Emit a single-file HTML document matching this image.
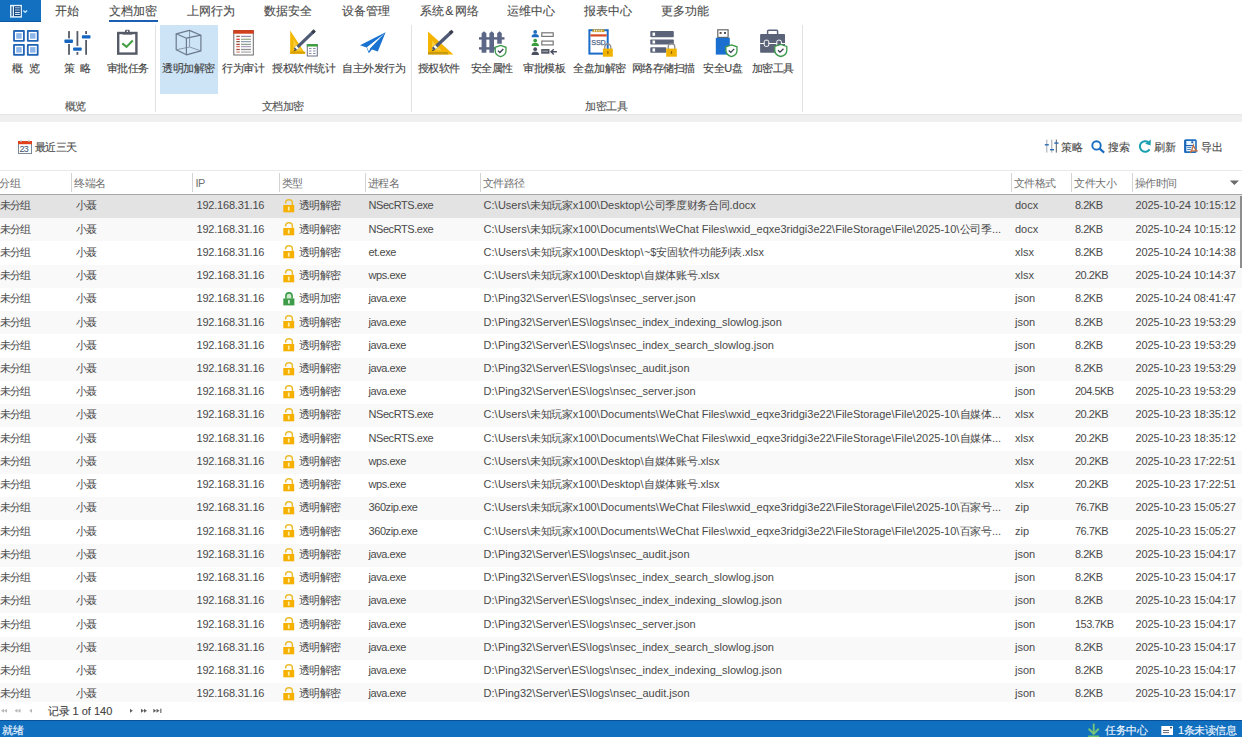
<!DOCTYPE html><html><head><meta charset="utf-8"><style>
html,body{margin:0;padding:0;width:1242px;height:737px;overflow:hidden;background:#fff;font-family:"Liberation Sans", sans-serif;}
.t{position:absolute;white-space:nowrap;line-height:20px;-webkit-text-stroke-width:0.12px;}
.g .t{-webkit-text-stroke-width:0;}
.a{position:absolute;}
svg{position:absolute;overflow:visible}

</style></head><body>
<div class="a" style="left:0px;top:0px;width:40.8px;height:21.6px;background:#136fbf;"></div>
<div class="a" style="left:0px;top:20.6px;width:40.8px;height:1px;background:#0d56a0;"></div>
<svg style="left:0;top:0" width="41" height="22">
<rect x="10.8" y="5.6" width="10.4" height="11.3" fill="#0d3f78" stroke="#dff3ff" stroke-width="1.5"/>
<line x1="13.4" y1="5.6" x2="13.4" y2="16.9" stroke="#dff3ff" stroke-width="1.4"/>
<rect x="14.4" y="6.6" width="6" height="9.4" fill="#0d3f78"/>
<line x1="15" y1="7.8" x2="19.8" y2="7.8" stroke="#a8c8e8" stroke-width="1.1"/>
<line x1="15" y1="10" x2="19.8" y2="10" stroke="#a8c8e8" stroke-width="1.1"/>
<line x1="15" y1="12.4" x2="19.8" y2="12.4" stroke="#dff3ff" stroke-width="1.1"/>
<line x1="15" y1="14.4" x2="19.8" y2="14.4" stroke="#dff3ff" stroke-width="1.1"/>
<path d="M23.3 10.5 L25.2 12.3 L27.1 10.5" fill="none" stroke="#b8e0ff" stroke-width="1.5"/>
</svg>
<div class="t" style="left:55px;top:1px;font-size:12px;color:#4c4c4c;">开始</div>
<div class="t" style="left:109px;top:1px;font-size:12px;color:#4c4c4c;">文档加密</div>
<div class="t" style="left:187px;top:1px;font-size:12px;color:#4c4c4c;">上网行为</div>
<div class="t" style="left:264px;top:1px;font-size:12px;color:#4c4c4c;">数据安全</div>
<div class="t" style="left:342px;top:1px;font-size:12px;color:#4c4c4c;">设备管理</div>
<div class="t" style="left:420px;top:1px;font-size:12px;color:#4c4c4c;">系统<span style="margin:0 1.3px">&amp;</span>网络</div>
<div class="t" style="left:506.5px;top:1px;font-size:12px;color:#4c4c4c;">运维中心</div>
<div class="t" style="left:584px;top:1px;font-size:12px;color:#4c4c4c;">报表中心</div>
<div class="t" style="left:661.3px;top:1px;font-size:12px;color:#4c4c4c;">更多功能</div>
<div class="a" style="left:109px;top:19.5px;width:49px;height:2.5px;background:#1a5fb4;"></div>
<div class="a" style="left:159.5px;top:25px;width:58.5px;height:69px;background:#cde4f7;"></div>
<div class="a" style="left:155px;top:25px;width:1px;height:87px;background:#e2e2e2;"></div>
<div class="a" style="left:411px;top:25px;width:1px;height:87px;background:#e2e2e2;"></div>
<div class="a" style="left:802px;top:25px;width:1px;height:87px;background:#e2e2e2;"></div>
<div class="a" style="left:0px;top:114px;width:1242px;height:8px;background:#efefef;"></div>
<div class="a" style="left:0px;top:114px;width:1242px;height:1px;background:#e6e6e6;"></div>
<div class="t" style="left:12.4px;top:58px;font-size:11px;color:#444;letter-spacing:-0.5px;">概<span style="margin-left:6.3px">览</span></div>
<div class="t" style="left:63.8px;top:58px;font-size:11px;color:#444;letter-spacing:-0.5px;">策<span style="margin-left:6.2px">略</span></div>
<div class="t" style="left:106.6px;top:58px;font-size:11px;color:#444;letter-spacing:-0.5px;">审批任务</div>
<div class="t" style="left:162px;top:58px;font-size:11px;color:#444;letter-spacing:-0.5px;">透明加解密</div>
<div class="t" style="left:222.4px;top:58px;font-size:11px;color:#444;letter-spacing:-0.5px;">行为审计</div>
<div class="t" style="left:272.2px;top:58px;font-size:11px;color:#444;letter-spacing:-0.5px;">授权软件统计</div>
<div class="t" style="left:342px;top:58px;font-size:11px;color:#444;letter-spacing:-0.5px;">自主外发行为</div>
<div class="t" style="left:417.7px;top:58px;font-size:11px;color:#444;letter-spacing:-0.5px;">授权软件</div>
<div class="t" style="left:470.8px;top:58px;font-size:11px;color:#444;letter-spacing:-0.5px;">安全属性</div>
<div class="t" style="left:523.2px;top:58px;font-size:11px;color:#444;letter-spacing:-0.5px;">审批模板</div>
<div class="t" style="left:573.3px;top:58px;font-size:11px;color:#444;letter-spacing:-0.5px;">全盘加解密</div>
<div class="t" style="left:631.8px;top:58px;font-size:11px;color:#444;letter-spacing:-0.5px;">网络存储扫描</div>
<div class="t" style="left:703.3px;top:58px;font-size:11px;color:#444;letter-spacing:-0.5px;">安全U盘</div>
<div class="t" style="left:751.6px;top:58px;font-size:11px;color:#444;letter-spacing:-0.5px;">加密工具</div>
<div class="t" style="left:64.6px;top:96px;font-size:11px;color:#555;letter-spacing:-0.5px;">概览</div>
<div class="t" style="left:261.6px;top:96px;font-size:11px;color:#555;letter-spacing:-0.5px;">文档加密</div>
<div class="t" style="left:585px;top:96px;font-size:11px;color:#555;letter-spacing:-0.5px;">加密工具</div>
<svg style="left:0;top:0" width="820" height="62" viewBox="0 0 820 62">
<!-- 概览 -->
<g>
<rect x="13.1" y="30.1" width="11.7" height="11.7" rx="1" fill="#2163b5"/><rect x="14.9" y="31.9" width="8.1" height="8.1" fill="#fff"/><rect x="16.2" y="33.2" width="5.5" height="5.5" fill="#8db6ea"/>
<rect x="26.9" y="30.1" width="11.7" height="11.7" rx="1" fill="#2163b5"/><rect x="28.7" y="31.9" width="8.1" height="8.1" fill="#fff"/><rect x="30" y="33.2" width="5.5" height="5.5" fill="#8db6ea"/>
<rect x="13.1" y="44" width="11.7" height="11.7" rx="1" fill="#2163b5"/><rect x="14.9" y="45.8" width="8.1" height="8.1" fill="#fff"/><rect x="16.2" y="47.1" width="5.5" height="5.5" fill="#8db6ea"/>
<rect x="26.9" y="44" width="11.7" height="11.7" rx="1" fill="#2163b5"/><rect x="28.7" y="45.8" width="8.1" height="8.1" fill="#fff"/><rect x="30" y="47.1" width="5.5" height="5.5" fill="#8db6ea"/>
</g>
<!-- 策略 sliders -->
<g fill="#555b66">
<rect x="68.1" y="31.1" width="1.8" height="7.3"/><rect x="68.1" y="44" width="1.8" height="10.8"/>
<rect x="76.5" y="31.1" width="1.8" height="14.8"/><rect x="76.5" y="52" width="1.8" height="2.8"/>
<rect x="85.2" y="31.1" width="1.8" height="2.9"/><rect x="85.2" y="40" width="1.8" height="14.8"/>
</g>
<g fill="#1565c0">
<rect x="64.4" y="39.6" width="8.6" height="3.3" rx="0.8"/>
<rect x="73.1" y="47.5" width="8.6" height="3.3" rx="0.8"/>
<rect x="81.9" y="35.2" width="8.6" height="3.4" rx="0.8"/>
</g>
<!-- 审批任务 clipboard -->
<rect x="118.2" y="33" width="18.2" height="20.6" fill="#fff" stroke="#555b66" stroke-width="2.4"/>
<rect x="122.8" y="32.3" width="9.4" height="2.3" fill="#555b66"/>
<rect x="125" y="29.7" width="4.7" height="3" rx="1.2" fill="#555b66"/>
<circle cx="127.35" cy="31.2" r="0.8" fill="#fff"/>
<path d="M122.3 43.4 L126.5 46.9 L132.8 40.4" fill="none" stroke="#45a045" stroke-width="2.1"/>
<!-- cube -->
<g fill="none" stroke="#6b7a8c" stroke-width="1.2" stroke-linejoin="round">
<path d="M189.5 30.4 L189.6 47 M189.6 47 L176.2 49.8 M189.6 47 L200.9 50.9" stroke="#8a99aa" stroke-width="1"/>
<path d="M189.4 30.4 L176.2 33.8 L186.4 38.2 L200.9 35.2 Z"/>
<path d="M176.2 33.8 L176.2 49.8 L186.4 54.8 L200.9 50.9 L200.9 35.2"/>
<path d="M186.4 38.2 L186.4 54.8"/>
</g>
<!-- 行为审计 -->
<rect x="233.8" y="30.6" width="19.5" height="24.4" fill="#fff" stroke="#6a6a6a" stroke-width="1"/>
<rect x="233.3" y="30.1" width="20.5" height="3.6" fill="#d0401f"/>
<g stroke-width="1.3">
<line x1="236.3" y1="36.4" x2="239.8" y2="36.4" stroke="#8a6a4a"/><line x1="241" y1="36.4" x2="251" y2="36.4" stroke="#9a90b0"/>
<line x1="236.3" y1="39.3" x2="239.8" y2="39.3" stroke="#e04040"/><line x1="241" y1="39.3" x2="251" y2="39.3" stroke="#a0b090"/>
<line x1="236.3" y1="41.6" x2="239.8" y2="41.6" stroke="#8a5a4a"/><line x1="241" y1="41.6" x2="251" y2="41.6" stroke="#90a0b0"/>
<line x1="236.3" y1="44.4" x2="239.8" y2="44.4" stroke="#a04a3a"/><line x1="241" y1="44.4" x2="251" y2="44.4" stroke="#90a090"/>
<line x1="236.3" y1="46.6" x2="239.8" y2="46.6" stroke="#e07060"/><line x1="241" y1="46.6" x2="251" y2="46.6" stroke="#b0a0c0"/>
<line x1="236.3" y1="49.5" x2="239.8" y2="49.5" stroke="#a04a3a"/><line x1="241" y1="49.5" x2="251" y2="49.5" stroke="#909090"/>
<line x1="236.3" y1="52.1" x2="239.8" y2="52.1" stroke="#d09080"/><line x1="241" y1="52.1" x2="251" y2="52.1" stroke="#b0b0b0"/>
</g>
<!-- 授权软件统计 -->
<path d="M290.2 30.4 L290.2 53.7 L305.2 53.7 Z" fill="#f5b800"/>
<path d="M293.3 39.5 L293.3 50.6 L301.8 50.6 Z" fill="#f9cc3c"/>
<rect x="290.2" y="51.6" width="15" height="2.1" fill="#d9a000"/>
<line x1="294.8" y1="49.6" x2="313.8" y2="31.4" stroke="#4f5a74" stroke-width="3.2"/>
<line x1="296" y1="48.4" x2="297.6" y2="46.9" stroke="#fff" stroke-width="3.4"/>
<line x1="312.3" y1="32.8" x2="314.8" y2="30.4" stroke="#3a3f4a" stroke-width="3.2"/>
<path d="M294.8 49.6 L293.3 51.4 L295.8 50.6 Z" fill="#333"/>
<rect x="307.3" y="44.7" width="10" height="11.3" fill="#fff" stroke="#6a6f86" stroke-width="1"/>
<rect x="306.8" y="44.2" width="11" height="2.3" fill="#3a9e3a"/>
<g fill="#8a90a8"><rect x="309" y="48" width="2.5" height="1"/><rect x="313" y="48" width="2.5" height="1"/><rect x="309" y="50.5" width="2.5" height="1"/><rect x="313" y="50.5" width="2.5" height="1"/><rect x="309" y="53" width="2.5" height="1"/><rect x="313" y="53" width="2.5" height="1"/></g>
<!-- paper plane -->
<path d="M385.6 32.2 L360 45.2 L366.6 47.4 L368.8 53.2 L372 49.4 L377.8 51.4 Z" fill="#1a73d0"/>
<path d="M384.6 33.4 L366.9 47.3 L368.9 51.6 L370.2 48.6 Z" fill="#fff"/>
<path d="M384.6 33.4 L370.2 48.6 L371.6 49.2 Z" fill="#1a73d0"/>
<!-- 授权软件 -->
<path d="M428 31.5 L428 54.4 L453.4 54.4 Z" fill="#f5b400"/>
<path d="M432 40.5 L432 50.6 L441.5 50.6 Z" fill="#f9cc3c"/>
<rect x="428" y="52" width="20" height="2.4" fill="#c89a10"/>
<line x1="433" y1="49.3" x2="451.2" y2="32.2" stroke="#4f5a74" stroke-width="3.3"/>
<line x1="434.6" y1="47.8" x2="436.3" y2="46.2" stroke="#fff" stroke-width="3.5"/>
<line x1="450" y1="33.3" x2="452.6" y2="30.9" stroke="#3a3f4a" stroke-width="3.3"/>
<path d="M433 49.3 L431.6 51.3 L434.2 50.5 Z" fill="#333"/>
<!-- fence -->
<g fill="#5a6482">
<rect x="479" y="37.2" width="25.5" height="2.4"/><rect x="479" y="47.2" width="17" height="2.4"/>
<path d="M481.6 33.3 L484 31.3 L486.4 33.3 L486.4 52.8 L481.6 52.8 Z" fill="#5d6888"/>
<path d="M489.4 33.3 L491.7 31.3 L494 33.3 L494 52.8 L489.4 52.8 Z" fill="#5d6888"/>
<path d="M497.2 33.3 L499.5 31.3 L501.8 33.3 L501.8 43.8 L497.2 43.8 Z" fill="#5d6888"/>
</g>
<g id="shield">
<path d="M500.6 45.4 L506 47.3 L506 51 C506 53.8 503.6 55.8 500.6 56.7 C497.6 55.8 495.2 53.8 495.2 51 L495.2 47.3 Z" fill="#fff" stroke="#3a9a48" stroke-width="1.3"/>
<path d="M497.9 50.6 L499.9 52.5 L503.3 49" fill="none" stroke="#3a4050" stroke-width="1.3"/>
</g>
<!-- 审批模板 -->
<g fill="#1a6cc0"><circle cx="535.2" cy="31.9" r="1.9"/><path d="M531.5 37.3 C531.5 35 533 34 535.2 34 C537.4 34 539 35 539 37.3 Z"/></g>
<g fill="#3a9e3a"><circle cx="535.2" cy="40.6" r="1.9"/><path d="M531.5 46 C531.5 43.7 533 42.7 535.2 42.7 C537.4 42.7 539 43.7 539 46 Z"/></g>
<g fill="#4a4f5e"><circle cx="535.2" cy="49.2" r="1.9"/><path d="M531.5 54.9 C531.5 52.4 533 51.4 535.2 51.4 C537.4 51.4 539 52.4 539 54.9 Z"/></g>
<rect x="541.8" y="32.8" width="11.4" height="3.6" fill="#fff" stroke="#777" stroke-width="1.2"/>
<rect x="541.8" y="41.1" width="11.4" height="3.8" fill="#fff" stroke="#777" stroke-width="1.2"/>
<rect x="541.2" y="49" width="8.3" height="4.7" fill="#555a66"/>
<rect x="542.5" y="50.6" width="5.5" height="1.3" fill="#9aa0aa"/>
<path d="M556.9 51.8 L551.5 51.8 M553.8 49.2 L551 51.8 L553.8 54.4" fill="none" stroke="#4a4f5e" stroke-width="1.4"/>
<!-- SSD -->
<rect x="589.4" y="30.2" width="18.3" height="23.4" fill="#fff" stroke="#1a6cc8" stroke-width="2"/>
<rect x="592.5" y="29.3" width="12" height="2.8" fill="#c8a030"/>
<g fill="#fff"><rect x="594" y="29.8" width="0.8" height="1.8"/><rect x="596.3" y="29.8" width="0.8" height="1.8"/><rect x="598.6" y="29.8" width="0.8" height="1.8"/><rect x="600.9" y="29.8" width="0.8" height="1.8"/></g>
<rect x="590.4" y="34.3" width="16.3" height="2.2" fill="#d84a20"/>
<text x="591.3" y="45.2" font-family="Liberation Sans" font-size="7.2" fill="#50688a" stroke="#50688a" stroke-width="0.25" letter-spacing="-0.2">SSD</text>
<g id="lock1">
<path d="M604.8 49 L604.8 47 A3 3 0 0 1 610.8 47 L610.8 49" fill="none" stroke="#8a8a8a" stroke-width="1.3"/>
<rect x="602.9" y="48.6" width="9.9" height="8.1" fill="#f0b400"/>
<rect x="607.3" y="51" width="1.2" height="3" fill="#a06000"/>
</g>
<!-- server -->
<g fill="#5a6378">
<rect x="650.3" y="31.1" width="23.5" height="6.2" rx="0.8"/>
<rect x="650.3" y="39.4" width="23.5" height="5.1" rx="0.8"/>
<rect x="650.3" y="47.2" width="16" height="5.6" rx="0.8"/>
</g>
<g fill="#fff"><rect x="652.5" y="32.6" width="2.6" height="3.2"/><rect x="652.5" y="40.5" width="2.6" height="3"/><rect x="652.5" y="48.4" width="2.6" height="3.2"/></g>
<path d="M668.2 49 L668.2 47 A3.3 3.3 0 0 1 674.8 47 L674.8 49" fill="none" stroke="#8a8a8a" stroke-width="1.3"/>
<rect x="666.2" y="48.6" width="10.6" height="8.1" fill="#f0b400"/>
<rect x="670.9" y="51" width="1.2" height="3" fill="#a06000"/>
<!-- USB -->
<rect x="717.8" y="29.8" width="10.3" height="7.6" fill="#fff" stroke="#666" stroke-width="1.2"/>
<rect x="719.6" y="32" width="2" height="1.9" fill="#5a4a40"/><rect x="724" y="32" width="2" height="1.9" fill="#4a4a5a"/>
<rect x="715.8" y="37.8" width="14" height="16.8" fill="#1a6fd0"/>
<path d="M731.5 44.9 L737 46.8 L737 50.6 C737 53.5 734.6 55.8 731.5 56.7 C728.4 55.8 725.9 53.5 725.9 50.6 L725.9 46.8 Z" fill="#fff" stroke="#3a9a48" stroke-width="1.3"/>
<path d="M728.8 50.5 L730.8 52.4 L734.2 48.9" fill="none" stroke="#3a4050" stroke-width="1.3"/>
<!-- toolbox -->
<rect x="767.6" y="30.2" width="10" height="5" rx="1" fill="none" stroke="#5a6378" stroke-width="1.5"/>
<rect x="760.1" y="34.1" width="24.9" height="18.7" rx="0.8" fill="#5a6378"/>
<rect x="760.1" y="43" width="24.9" height="1" fill="#fff"/>
<rect x="764.2" y="40.2" width="4.6" height="6.2" rx="1.6" fill="#5a6378" stroke="#fff" stroke-width="1"/>
<rect x="776.8" y="40.2" width="4.6" height="6.2" rx="1.6" fill="#5a6378" stroke="#fff" stroke-width="1"/>
<path d="M780.8 44.5 L786.8 46.5 L786.8 50.4 C786.8 53.3 784.2 55.6 780.8 56.5 C777.4 55.6 774.8 53.3 774.8 50.4 L774.8 46.5 Z" fill="#fff" stroke="#3a9a48" stroke-width="1.3"/>
<path d="M778 50.3 L780 52.2 L783.5 48.7" fill="none" stroke="#3a4050" stroke-width="1.3"/>
</svg>

<svg style="left:0;top:130px" width="1242" height="30" viewBox="0 130 1242 30">
<!-- calendar -->
<rect x="18.5" y="141.5" width="13" height="12" fill="#fff" stroke="#7a8a9a" stroke-width="1"/>
<rect x="18" y="141" width="14" height="3.2" fill="#e0401a"/>
<rect x="20.5" y="139.8" width="1.3" height="2.2" fill="#c0c8d0"/><rect x="28.2" y="139.8" width="1.3" height="2.2" fill="#c0c8d0"/>
<text x="19.4" y="152.2" font-family="Liberation Sans" font-size="9" fill="#3d526e" letter-spacing="-0.6">23</text>
<!-- sliders small -->
<rect x="1046.3" y="139.6" width="1" height="13" fill="#a0a8b0"/>
<rect x="1051.3" y="139.6" width="1" height="13" fill="#9aa2aa"/>
<rect x="1055.8" y="139.6" width="1" height="13" fill="#555b66"/>
<rect x="1044.8" y="144.1" width="4" height="1.4" fill="#2a6cb0"/>
<rect x="1050" y="149" width="4" height="1.4" fill="#2a6cb0"/>
<rect x="1054.3" y="142.4" width="4.2" height="1.4" fill="#2a6cb0"/>
<!-- search -->
<circle cx="1096.5" cy="145.4" r="4.2" fill="none" stroke="#1a6cc0" stroke-width="1.9"/>
<line x1="1099.6" y1="148.6" x2="1104.2" y2="152.6" stroke="#1a6cc0" stroke-width="2.1"/>
<!-- refresh -->
<path d="M1148.6 142.4 A5.3 5.3 0 1 0 1149.6 149.4" fill="none" stroke="#1aa0b0" stroke-width="2"/>
<path d="M1150.8 139.4 L1150.6 145.4 L1145.2 143.8 Z" fill="#1aa0b0"/>
<!-- export -->
<rect x="1185" y="140.1" width="11" height="12" rx="0.8" fill="#eaf6ff" stroke="#1f6fc0" stroke-width="1.6"/>
<rect x="1184.3" y="140" width="2" height="12.6" fill="#1a66b8"/>
<rect x="1191.3" y="141.3" width="1.9" height="1.9" fill="#1a5aa8"/>
<rect x="1185.5" y="145" width="7.5" height="1.1" fill="#1f5fb0"/>
<rect x="1187.2" y="147" width="4.2" height="0.9" fill="#3a78c0"/><rect x="1187.2" y="149" width="3.6" height="0.9" fill="#3a78c0"/>
<path d="M1190.2 153 Q1192.4 149.5 1193.4 145.4 Q1194.6 149.6 1197.6 151.4 M1189.8 151.6 Q1193 150.6 1196.2 151" fill="none" stroke="#c8703e" stroke-width="1.25"/>
</svg>

<div class="t" style="left:34.5px;top:137px;font-size:11px;color:#4a4a4a;letter-spacing:-0.5px;">最近三天</div>
<div class="t" style="left:1061px;top:137px;font-size:11px;color:#4a4a4a;letter-spacing:-0.5px;">策略</div>
<div class="t" style="left:1108px;top:137px;font-size:11px;color:#4a4a4a;letter-spacing:-0.5px;">搜索</div>
<div class="t" style="left:1154px;top:137px;font-size:11px;color:#4a4a4a;letter-spacing:-0.5px;">刷新</div>
<div class="t" style="left:1201px;top:137px;font-size:11px;color:#4a4a4a;letter-spacing:-0.5px;">导出</div>
<div class="a" style="left:0px;top:170px;width:1242px;height:1px;background:#e8e8e8;"></div>
<div class="a" style="left:71px;top:173px;width:1px;height:19px;background:#d4d4d4;"></div>
<div class="a" style="left:192px;top:173px;width:1px;height:19px;background:#d4d4d4;"></div>
<div class="a" style="left:278.5px;top:173px;width:1px;height:19px;background:#d4d4d4;"></div>
<div class="a" style="left:364.5px;top:173px;width:1px;height:19px;background:#d4d4d4;"></div>
<div class="a" style="left:480px;top:173px;width:1px;height:19px;background:#d4d4d4;"></div>
<div class="a" style="left:1010.5px;top:173px;width:1px;height:19px;background:#d4d4d4;"></div>
<div class="a" style="left:1071px;top:173px;width:1px;height:19px;background:#d4d4d4;"></div>
<div class="a" style="left:1131.5px;top:173px;width:1px;height:19px;background:#d4d4d4;"></div>
<div class="a" style="left:0px;top:193.5px;width:1242px;height:1.5px;background:#a8a8a8;"></div>
<div class="t" style="left:-1px;top:173px;font-size:11px;color:#707070;letter-spacing:-0.5px;-webkit-text-stroke-width:0;">分组</div>
<div class="t" style="left:74px;top:173px;font-size:11px;color:#707070;letter-spacing:-0.5px;-webkit-text-stroke-width:0;">终端名</div>
<div class="t" style="left:195.5px;top:173px;font-size:11px;color:#707070;letter-spacing:-0.5px;-webkit-text-stroke-width:0;">IP</div>
<div class="t" style="left:281.5px;top:173px;font-size:11px;color:#707070;letter-spacing:-0.5px;-webkit-text-stroke-width:0;">类型</div>
<div class="t" style="left:367.5px;top:173px;font-size:11px;color:#707070;letter-spacing:-0.5px;-webkit-text-stroke-width:0;">进程名</div>
<div class="t" style="left:482.5px;top:173px;font-size:11px;color:#707070;letter-spacing:-0.5px;-webkit-text-stroke-width:0;">文件路径</div>
<div class="t" style="left:1013.5px;top:173px;font-size:11px;color:#707070;letter-spacing:-0.5px;-webkit-text-stroke-width:0;">文件格式</div>
<div class="t" style="left:1074px;top:173px;font-size:11px;color:#707070;letter-spacing:-0.5px;-webkit-text-stroke-width:0;">文件大小</div>
<div class="t" style="left:1134.5px;top:173px;font-size:11px;color:#707070;letter-spacing:-0.5px;-webkit-text-stroke-width:0;">操作时间</div>
<svg style="left:1229px;top:179px" width="12" height="8"><path d="M0.8 1.5 L10 1.5 L5.4 6 Z" fill="#6a6a6a"/></svg>
<div class="a g" style="left:0;top:195px;width:1242px;height:507px;overflow:hidden">
<div class="a" style="left:0px;top:0.0px;width:1242px;height:23.24px;background:#e3e3e3;"></div>
<div class="a" style="left:0px;top:23.24px;width:1242px;height:23.24px;background:#f9f9f9;"></div>
<div class="a" style="left:0px;top:69.72px;width:1242px;height:23.24px;background:#f9f9f9;"></div>
<div class="a" style="left:0px;top:116.19999999999999px;width:1242px;height:23.24px;background:#f9f9f9;"></div>
<div class="a" style="left:0px;top:162.67999999999998px;width:1242px;height:23.24px;background:#f9f9f9;"></div>
<div class="a" style="left:0px;top:209.16px;width:1242px;height:23.24px;background:#f9f9f9;"></div>
<div class="a" style="left:0px;top:255.64px;width:1242px;height:23.24px;background:#f9f9f9;"></div>
<div class="a" style="left:0px;top:302.12px;width:1242px;height:23.24px;background:#f9f9f9;"></div>
<div class="a" style="left:0px;top:348.59999999999997px;width:1242px;height:23.24px;background:#f9f9f9;"></div>
<div class="a" style="left:0px;top:395.08px;width:1242px;height:23.24px;background:#f9f9f9;"></div>
<div class="a" style="left:0px;top:441.55999999999995px;width:1242px;height:23.24px;background:#f9f9f9;"></div>
<div class="a" style="left:0px;top:488.03999999999996px;width:1242px;height:23.24px;background:#f9f9f9;"></div>
<div class="t" style="left:-0.5px;top:0.3px;font-size:11px;color:#4a4a4a;letter-spacing:-0.6px;">未分组</div>
<div class="t" style="left:75.5px;top:0.3px;font-size:11px;color:#4a4a4a;letter-spacing:-0.6px;">小聂</div>
<div class="t" style="left:196.5px;top:0.3px;font-size:11px;color:#4a4a4a;letter-spacing:-0.2px;">192.168.31.16</div>
<div class="t" style="left:299px;top:0.3px;font-size:11px;color:#4a4a4a;letter-spacing:-0.6px;">透明解密</div>
<div class="t" style="left:368.5px;top:0.3px;font-size:11px;color:#4a4a4a;letter-spacing:-0.43px;">NSecRTS.exe</div>
<div class="t" style="left:483.5px;top:0.3px;font-size:11px;color:#4a4a4a;letter-spacing:0.0px;">C:<span style="letter-spacing:0.35px">\</span>Users<span style="letter-spacing:0.35px">\</span><span style="font-size:11px;letter-spacing:-0.3px">未知玩家</span>x100<span style="letter-spacing:0.35px">\</span>Desktop<span style="letter-spacing:0.35px">\</span><span style="font-size:11px;letter-spacing:-0.3px">公司季度财务合同</span>.docx</div>
<div class="t" style="left:1015px;top:0.3px;font-size:11px;color:#4a4a4a;">docx</div>
<div class="t" style="left:1075px;top:0.3px;font-size:11px;color:#4a4a4a;letter-spacing:-0.5px;">8.2KB</div>
<div class="t" style="left:1135.5px;top:0.3px;font-size:11px;color:#4a4a4a;letter-spacing:-0.1px;">2025-10-24 10:15:12</div>
<svg style="left:283px;top:3.0px" width="12" height="15"><path d="M2.6 5.6 V5 A3.4 3.2 0 0 1 9.4 5 V8" fill="none" stroke="#ecbc2a" stroke-width="1.5"/><rect x="0.3" y="7" width="10.9" height="7.3" fill="#f5b000"/><rect x="4.9" y="8.6" width="1.7" height="4" fill="#fff2a8"/></svg>
<div class="t" style="left:-0.5px;top:23.54px;font-size:11px;color:#4a4a4a;letter-spacing:-0.6px;">未分组</div>
<div class="t" style="left:75.5px;top:23.54px;font-size:11px;color:#4a4a4a;letter-spacing:-0.6px;">小聂</div>
<div class="t" style="left:196.5px;top:23.54px;font-size:11px;color:#4a4a4a;letter-spacing:-0.2px;">192.168.31.16</div>
<div class="t" style="left:299px;top:23.54px;font-size:11px;color:#4a4a4a;letter-spacing:-0.6px;">透明解密</div>
<div class="t" style="left:368.5px;top:23.54px;font-size:11px;color:#4a4a4a;letter-spacing:-0.43px;">NSecRTS.exe</div>
<div class="t" style="left:483.5px;top:23.54px;font-size:11px;color:#4a4a4a;letter-spacing:0.0px;">C:<span style="letter-spacing:0.35px">\</span>Users<span style="letter-spacing:0.35px">\</span><span style="font-size:11px;letter-spacing:-0.3px">未知玩家</span>x100<span style="letter-spacing:0.35px">\</span>Documents<span style="letter-spacing:0.35px">\</span>WeChat Files<span style="letter-spacing:0.35px">\</span>wxid_eqxe3ridgi3e22<span style="letter-spacing:0.35px">\</span>FileStorage<span style="letter-spacing:0.35px">\</span>File<span style="letter-spacing:0.35px">\</span>2025-10<span style="letter-spacing:0.35px">\</span><span style="font-size:11px;letter-spacing:-0.3px">公司季</span>...</div>
<div class="t" style="left:1015px;top:23.54px;font-size:11px;color:#4a4a4a;">docx</div>
<div class="t" style="left:1075px;top:23.54px;font-size:11px;color:#4a4a4a;letter-spacing:-0.5px;">8.2KB</div>
<div class="t" style="left:1135.5px;top:23.54px;font-size:11px;color:#4a4a4a;letter-spacing:-0.1px;">2025-10-24 10:15:12</div>
<svg style="left:283px;top:26.24px" width="12" height="15"><path d="M2.6 5.6 V5 A3.4 3.2 0 0 1 9.4 5 V8" fill="none" stroke="#ecbc2a" stroke-width="1.5"/><rect x="0.3" y="7" width="10.9" height="7.3" fill="#f5b000"/><rect x="4.9" y="8.6" width="1.7" height="4" fill="#fff2a8"/></svg>
<div class="t" style="left:-0.5px;top:46.779999999999994px;font-size:11px;color:#4a4a4a;letter-spacing:-0.6px;">未分组</div>
<div class="t" style="left:75.5px;top:46.779999999999994px;font-size:11px;color:#4a4a4a;letter-spacing:-0.6px;">小聂</div>
<div class="t" style="left:196.5px;top:46.779999999999994px;font-size:11px;color:#4a4a4a;letter-spacing:-0.2px;">192.168.31.16</div>
<div class="t" style="left:299px;top:46.779999999999994px;font-size:11px;color:#4a4a4a;letter-spacing:-0.6px;">透明解密</div>
<div class="t" style="left:368.5px;top:46.779999999999994px;font-size:11px;color:#4a4a4a;letter-spacing:-0.43px;">et.exe</div>
<div class="t" style="left:483.5px;top:46.779999999999994px;font-size:11px;color:#4a4a4a;letter-spacing:0.0px;">C:<span style="letter-spacing:0.35px">\</span>Users<span style="letter-spacing:0.35px">\</span><span style="font-size:11px;letter-spacing:-0.3px">未知玩家</span>x100<span style="letter-spacing:0.35px">\</span>Desktop<span style="letter-spacing:0.35px">\</span>~$<span style="font-size:11px;letter-spacing:-0.3px">安固软件功能列表</span>.xlsx</div>
<div class="t" style="left:1015px;top:46.779999999999994px;font-size:11px;color:#4a4a4a;">xlsx</div>
<div class="t" style="left:1075px;top:46.779999999999994px;font-size:11px;color:#4a4a4a;letter-spacing:-0.5px;">8.2KB</div>
<div class="t" style="left:1135.5px;top:46.779999999999994px;font-size:11px;color:#4a4a4a;letter-spacing:-0.1px;">2025-10-24 10:14:38</div>
<svg style="left:283px;top:49.48px" width="12" height="15"><path d="M2.6 5.6 V5 A3.4 3.2 0 0 1 9.4 5 V8" fill="none" stroke="#ecbc2a" stroke-width="1.5"/><rect x="0.3" y="7" width="10.9" height="7.3" fill="#f5b000"/><rect x="4.9" y="8.6" width="1.7" height="4" fill="#fff2a8"/></svg>
<div class="t" style="left:-0.5px;top:70.02px;font-size:11px;color:#4a4a4a;letter-spacing:-0.6px;">未分组</div>
<div class="t" style="left:75.5px;top:70.02px;font-size:11px;color:#4a4a4a;letter-spacing:-0.6px;">小聂</div>
<div class="t" style="left:196.5px;top:70.02px;font-size:11px;color:#4a4a4a;letter-spacing:-0.2px;">192.168.31.16</div>
<div class="t" style="left:299px;top:70.02px;font-size:11px;color:#4a4a4a;letter-spacing:-0.6px;">透明解密</div>
<div class="t" style="left:368.5px;top:70.02px;font-size:11px;color:#4a4a4a;letter-spacing:-0.43px;">wps.exe</div>
<div class="t" style="left:483.5px;top:70.02px;font-size:11px;color:#4a4a4a;letter-spacing:0.0px;">C:<span style="letter-spacing:0.35px">\</span>Users<span style="letter-spacing:0.35px">\</span><span style="font-size:11px;letter-spacing:-0.3px">未知玩家</span>x100<span style="letter-spacing:0.35px">\</span>Desktop<span style="letter-spacing:0.35px">\</span><span style="font-size:11px;letter-spacing:-0.3px">自媒体账号</span>.xlsx</div>
<div class="t" style="left:1015px;top:70.02px;font-size:11px;color:#4a4a4a;">xlsx</div>
<div class="t" style="left:1075px;top:70.02px;font-size:11px;color:#4a4a4a;letter-spacing:-0.5px;">20.2KB</div>
<div class="t" style="left:1135.5px;top:70.02px;font-size:11px;color:#4a4a4a;letter-spacing:-0.1px;">2025-10-24 10:14:37</div>
<svg style="left:283px;top:72.72px" width="12" height="15"><path d="M2.6 5.6 V5 A3.4 3.2 0 0 1 9.4 5 V8" fill="none" stroke="#ecbc2a" stroke-width="1.5"/><rect x="0.3" y="7" width="10.9" height="7.3" fill="#f5b000"/><rect x="4.9" y="8.6" width="1.7" height="4" fill="#fff2a8"/></svg>
<div class="t" style="left:-0.5px;top:93.25999999999999px;font-size:11px;color:#4a4a4a;letter-spacing:-0.6px;">未分组</div>
<div class="t" style="left:75.5px;top:93.25999999999999px;font-size:11px;color:#4a4a4a;letter-spacing:-0.6px;">小聂</div>
<div class="t" style="left:196.5px;top:93.25999999999999px;font-size:11px;color:#4a4a4a;letter-spacing:-0.2px;">192.168.31.16</div>
<div class="t" style="left:299px;top:93.25999999999999px;font-size:11px;color:#4a4a4a;letter-spacing:-0.6px;">透明加密</div>
<div class="t" style="left:368.5px;top:93.25999999999999px;font-size:11px;color:#4a4a4a;letter-spacing:-0.43px;">java.exe</div>
<div class="t" style="left:483.5px;top:93.25999999999999px;font-size:11px;color:#4a4a4a;letter-spacing:0.0px;">D:<span style="letter-spacing:0.35px">\</span>Ping32<span style="letter-spacing:0.35px">\</span>Server<span style="letter-spacing:0.35px">\</span>ES<span style="letter-spacing:0.35px">\</span>logs<span style="letter-spacing:0.35px">\</span>nsec_server.json</div>
<div class="t" style="left:1015px;top:93.25999999999999px;font-size:11px;color:#4a4a4a;">json</div>
<div class="t" style="left:1075px;top:93.25999999999999px;font-size:11px;color:#4a4a4a;letter-spacing:-0.5px;">8.2KB</div>
<div class="t" style="left:1135.5px;top:93.25999999999999px;font-size:11px;color:#4a4a4a;letter-spacing:-0.1px;">2025-10-24 08:41:47</div>
<svg style="left:283px;top:95.96px" width="12" height="15"><path d="M2.9 7.6 V5 A3.1 3.1 0 0 1 9.1 5 V7.6" fill="#cfe9cf" stroke="#3d9c47" stroke-width="1.6"/><rect x="0.3" y="7.4" width="11.1" height="7" fill="#3d9c47"/><rect x="5.1" y="9" width="1.6" height="3.6" fill="#e8f5e8"/></svg>
<div class="t" style="left:-0.5px;top:116.49999999999999px;font-size:11px;color:#4a4a4a;letter-spacing:-0.6px;">未分组</div>
<div class="t" style="left:75.5px;top:116.49999999999999px;font-size:11px;color:#4a4a4a;letter-spacing:-0.6px;">小聂</div>
<div class="t" style="left:196.5px;top:116.49999999999999px;font-size:11px;color:#4a4a4a;letter-spacing:-0.2px;">192.168.31.16</div>
<div class="t" style="left:299px;top:116.49999999999999px;font-size:11px;color:#4a4a4a;letter-spacing:-0.6px;">透明解密</div>
<div class="t" style="left:368.5px;top:116.49999999999999px;font-size:11px;color:#4a4a4a;letter-spacing:-0.43px;">java.exe</div>
<div class="t" style="left:483.5px;top:116.49999999999999px;font-size:11px;color:#4a4a4a;letter-spacing:0.0px;">D:<span style="letter-spacing:0.35px">\</span>Ping32<span style="letter-spacing:0.35px">\</span>Server<span style="letter-spacing:0.35px">\</span>ES<span style="letter-spacing:0.35px">\</span>logs<span style="letter-spacing:0.35px">\</span>nsec_index_indexing_slowlog.json</div>
<div class="t" style="left:1015px;top:116.49999999999999px;font-size:11px;color:#4a4a4a;">json</div>
<div class="t" style="left:1075px;top:116.49999999999999px;font-size:11px;color:#4a4a4a;letter-spacing:-0.5px;">8.2KB</div>
<div class="t" style="left:1135.5px;top:116.49999999999999px;font-size:11px;color:#4a4a4a;letter-spacing:-0.1px;">2025-10-23 19:53:29</div>
<svg style="left:283px;top:119.19999999999999px" width="12" height="15"><path d="M2.6 5.6 V5 A3.4 3.2 0 0 1 9.4 5 V8" fill="none" stroke="#ecbc2a" stroke-width="1.5"/><rect x="0.3" y="7" width="10.9" height="7.3" fill="#f5b000"/><rect x="4.9" y="8.6" width="1.7" height="4" fill="#fff2a8"/></svg>
<div class="t" style="left:-0.5px;top:139.74px;font-size:11px;color:#4a4a4a;letter-spacing:-0.6px;">未分组</div>
<div class="t" style="left:75.5px;top:139.74px;font-size:11px;color:#4a4a4a;letter-spacing:-0.6px;">小聂</div>
<div class="t" style="left:196.5px;top:139.74px;font-size:11px;color:#4a4a4a;letter-spacing:-0.2px;">192.168.31.16</div>
<div class="t" style="left:299px;top:139.74px;font-size:11px;color:#4a4a4a;letter-spacing:-0.6px;">透明解密</div>
<div class="t" style="left:368.5px;top:139.74px;font-size:11px;color:#4a4a4a;letter-spacing:-0.43px;">java.exe</div>
<div class="t" style="left:483.5px;top:139.74px;font-size:11px;color:#4a4a4a;letter-spacing:0.0px;">D:<span style="letter-spacing:0.35px">\</span>Ping32<span style="letter-spacing:0.35px">\</span>Server<span style="letter-spacing:0.35px">\</span>ES<span style="letter-spacing:0.35px">\</span>logs<span style="letter-spacing:0.35px">\</span>nsec_index_search_slowlog.json</div>
<div class="t" style="left:1015px;top:139.74px;font-size:11px;color:#4a4a4a;">json</div>
<div class="t" style="left:1075px;top:139.74px;font-size:11px;color:#4a4a4a;letter-spacing:-0.5px;">8.2KB</div>
<div class="t" style="left:1135.5px;top:139.74px;font-size:11px;color:#4a4a4a;letter-spacing:-0.1px;">2025-10-23 19:53:29</div>
<svg style="left:283px;top:142.44px" width="12" height="15"><path d="M2.6 5.6 V5 A3.4 3.2 0 0 1 9.4 5 V8" fill="none" stroke="#ecbc2a" stroke-width="1.5"/><rect x="0.3" y="7" width="10.9" height="7.3" fill="#f5b000"/><rect x="4.9" y="8.6" width="1.7" height="4" fill="#fff2a8"/></svg>
<div class="t" style="left:-0.5px;top:162.98px;font-size:11px;color:#4a4a4a;letter-spacing:-0.6px;">未分组</div>
<div class="t" style="left:75.5px;top:162.98px;font-size:11px;color:#4a4a4a;letter-spacing:-0.6px;">小聂</div>
<div class="t" style="left:196.5px;top:162.98px;font-size:11px;color:#4a4a4a;letter-spacing:-0.2px;">192.168.31.16</div>
<div class="t" style="left:299px;top:162.98px;font-size:11px;color:#4a4a4a;letter-spacing:-0.6px;">透明解密</div>
<div class="t" style="left:368.5px;top:162.98px;font-size:11px;color:#4a4a4a;letter-spacing:-0.43px;">java.exe</div>
<div class="t" style="left:483.5px;top:162.98px;font-size:11px;color:#4a4a4a;letter-spacing:0.0px;">D:<span style="letter-spacing:0.35px">\</span>Ping32<span style="letter-spacing:0.35px">\</span>Server<span style="letter-spacing:0.35px">\</span>ES<span style="letter-spacing:0.35px">\</span>logs<span style="letter-spacing:0.35px">\</span>nsec_audit.json</div>
<div class="t" style="left:1015px;top:162.98px;font-size:11px;color:#4a4a4a;">json</div>
<div class="t" style="left:1075px;top:162.98px;font-size:11px;color:#4a4a4a;letter-spacing:-0.5px;">8.2KB</div>
<div class="t" style="left:1135.5px;top:162.98px;font-size:11px;color:#4a4a4a;letter-spacing:-0.1px;">2025-10-23 19:53:29</div>
<svg style="left:283px;top:165.67999999999998px" width="12" height="15"><path d="M2.6 5.6 V5 A3.4 3.2 0 0 1 9.4 5 V8" fill="none" stroke="#ecbc2a" stroke-width="1.5"/><rect x="0.3" y="7" width="10.9" height="7.3" fill="#f5b000"/><rect x="4.9" y="8.6" width="1.7" height="4" fill="#fff2a8"/></svg>
<div class="t" style="left:-0.5px;top:186.22px;font-size:11px;color:#4a4a4a;letter-spacing:-0.6px;">未分组</div>
<div class="t" style="left:75.5px;top:186.22px;font-size:11px;color:#4a4a4a;letter-spacing:-0.6px;">小聂</div>
<div class="t" style="left:196.5px;top:186.22px;font-size:11px;color:#4a4a4a;letter-spacing:-0.2px;">192.168.31.16</div>
<div class="t" style="left:299px;top:186.22px;font-size:11px;color:#4a4a4a;letter-spacing:-0.6px;">透明解密</div>
<div class="t" style="left:368.5px;top:186.22px;font-size:11px;color:#4a4a4a;letter-spacing:-0.43px;">java.exe</div>
<div class="t" style="left:483.5px;top:186.22px;font-size:11px;color:#4a4a4a;letter-spacing:0.0px;">D:<span style="letter-spacing:0.35px">\</span>Ping32<span style="letter-spacing:0.35px">\</span>Server<span style="letter-spacing:0.35px">\</span>ES<span style="letter-spacing:0.35px">\</span>logs<span style="letter-spacing:0.35px">\</span>nsec_server.json</div>
<div class="t" style="left:1015px;top:186.22px;font-size:11px;color:#4a4a4a;">json</div>
<div class="t" style="left:1075px;top:186.22px;font-size:11px;color:#4a4a4a;letter-spacing:-0.5px;">204.5KB</div>
<div class="t" style="left:1135.5px;top:186.22px;font-size:11px;color:#4a4a4a;letter-spacing:-0.1px;">2025-10-23 19:53:29</div>
<svg style="left:283px;top:188.92px" width="12" height="15"><path d="M2.6 5.6 V5 A3.4 3.2 0 0 1 9.4 5 V8" fill="none" stroke="#ecbc2a" stroke-width="1.5"/><rect x="0.3" y="7" width="10.9" height="7.3" fill="#f5b000"/><rect x="4.9" y="8.6" width="1.7" height="4" fill="#fff2a8"/></svg>
<div class="t" style="left:-0.5px;top:209.46px;font-size:11px;color:#4a4a4a;letter-spacing:-0.6px;">未分组</div>
<div class="t" style="left:75.5px;top:209.46px;font-size:11px;color:#4a4a4a;letter-spacing:-0.6px;">小聂</div>
<div class="t" style="left:196.5px;top:209.46px;font-size:11px;color:#4a4a4a;letter-spacing:-0.2px;">192.168.31.16</div>
<div class="t" style="left:299px;top:209.46px;font-size:11px;color:#4a4a4a;letter-spacing:-0.6px;">透明解密</div>
<div class="t" style="left:368.5px;top:209.46px;font-size:11px;color:#4a4a4a;letter-spacing:-0.43px;">NSecRTS.exe</div>
<div class="t" style="left:483.5px;top:209.46px;font-size:11px;color:#4a4a4a;letter-spacing:0.0px;">C:<span style="letter-spacing:0.35px">\</span>Users<span style="letter-spacing:0.35px">\</span><span style="font-size:11px;letter-spacing:-0.3px">未知玩家</span>x100<span style="letter-spacing:0.35px">\</span>Documents<span style="letter-spacing:0.35px">\</span>WeChat Files<span style="letter-spacing:0.35px">\</span>wxid_eqxe3ridgi3e22<span style="letter-spacing:0.35px">\</span>FileStorage<span style="letter-spacing:0.35px">\</span>File<span style="letter-spacing:0.35px">\</span>2025-10<span style="letter-spacing:0.35px">\</span><span style="font-size:11px;letter-spacing:-0.3px">自媒体</span>...</div>
<div class="t" style="left:1015px;top:209.46px;font-size:11px;color:#4a4a4a;">xlsx</div>
<div class="t" style="left:1075px;top:209.46px;font-size:11px;color:#4a4a4a;letter-spacing:-0.5px;">20.2KB</div>
<div class="t" style="left:1135.5px;top:209.46px;font-size:11px;color:#4a4a4a;letter-spacing:-0.1px;">2025-10-23 18:35:12</div>
<svg style="left:283px;top:212.16px" width="12" height="15"><path d="M2.6 5.6 V5 A3.4 3.2 0 0 1 9.4 5 V8" fill="none" stroke="#ecbc2a" stroke-width="1.5"/><rect x="0.3" y="7" width="10.9" height="7.3" fill="#f5b000"/><rect x="4.9" y="8.6" width="1.7" height="4" fill="#fff2a8"/></svg>
<div class="t" style="left:-0.5px;top:232.7px;font-size:11px;color:#4a4a4a;letter-spacing:-0.6px;">未分组</div>
<div class="t" style="left:75.5px;top:232.7px;font-size:11px;color:#4a4a4a;letter-spacing:-0.6px;">小聂</div>
<div class="t" style="left:196.5px;top:232.7px;font-size:11px;color:#4a4a4a;letter-spacing:-0.2px;">192.168.31.16</div>
<div class="t" style="left:299px;top:232.7px;font-size:11px;color:#4a4a4a;letter-spacing:-0.6px;">透明解密</div>
<div class="t" style="left:368.5px;top:232.7px;font-size:11px;color:#4a4a4a;letter-spacing:-0.43px;">NSecRTS.exe</div>
<div class="t" style="left:483.5px;top:232.7px;font-size:11px;color:#4a4a4a;letter-spacing:0.0px;">C:<span style="letter-spacing:0.35px">\</span>Users<span style="letter-spacing:0.35px">\</span><span style="font-size:11px;letter-spacing:-0.3px">未知玩家</span>x100<span style="letter-spacing:0.35px">\</span>Documents<span style="letter-spacing:0.35px">\</span>WeChat Files<span style="letter-spacing:0.35px">\</span>wxid_eqxe3ridgi3e22<span style="letter-spacing:0.35px">\</span>FileStorage<span style="letter-spacing:0.35px">\</span>File<span style="letter-spacing:0.35px">\</span>2025-10<span style="letter-spacing:0.35px">\</span><span style="font-size:11px;letter-spacing:-0.3px">自媒体</span>...</div>
<div class="t" style="left:1015px;top:232.7px;font-size:11px;color:#4a4a4a;">xlsx</div>
<div class="t" style="left:1075px;top:232.7px;font-size:11px;color:#4a4a4a;letter-spacing:-0.5px;">20.2KB</div>
<div class="t" style="left:1135.5px;top:232.7px;font-size:11px;color:#4a4a4a;letter-spacing:-0.1px;">2025-10-23 18:35:12</div>
<svg style="left:283px;top:235.39999999999998px" width="12" height="15"><path d="M2.6 5.6 V5 A3.4 3.2 0 0 1 9.4 5 V8" fill="none" stroke="#ecbc2a" stroke-width="1.5"/><rect x="0.3" y="7" width="10.9" height="7.3" fill="#f5b000"/><rect x="4.9" y="8.6" width="1.7" height="4" fill="#fff2a8"/></svg>
<div class="t" style="left:-0.5px;top:255.94px;font-size:11px;color:#4a4a4a;letter-spacing:-0.6px;">未分组</div>
<div class="t" style="left:75.5px;top:255.94px;font-size:11px;color:#4a4a4a;letter-spacing:-0.6px;">小聂</div>
<div class="t" style="left:196.5px;top:255.94px;font-size:11px;color:#4a4a4a;letter-spacing:-0.2px;">192.168.31.16</div>
<div class="t" style="left:299px;top:255.94px;font-size:11px;color:#4a4a4a;letter-spacing:-0.6px;">透明解密</div>
<div class="t" style="left:368.5px;top:255.94px;font-size:11px;color:#4a4a4a;letter-spacing:-0.43px;">wps.exe</div>
<div class="t" style="left:483.5px;top:255.94px;font-size:11px;color:#4a4a4a;letter-spacing:0.0px;">C:<span style="letter-spacing:0.35px">\</span>Users<span style="letter-spacing:0.35px">\</span><span style="font-size:11px;letter-spacing:-0.3px">未知玩家</span>x100<span style="letter-spacing:0.35px">\</span>Desktop<span style="letter-spacing:0.35px">\</span><span style="font-size:11px;letter-spacing:-0.3px">自媒体账号</span>.xlsx</div>
<div class="t" style="left:1015px;top:255.94px;font-size:11px;color:#4a4a4a;">xlsx</div>
<div class="t" style="left:1075px;top:255.94px;font-size:11px;color:#4a4a4a;letter-spacing:-0.5px;">20.2KB</div>
<div class="t" style="left:1135.5px;top:255.94px;font-size:11px;color:#4a4a4a;letter-spacing:-0.1px;">2025-10-23 17:22:51</div>
<svg style="left:283px;top:258.64px" width="12" height="15"><path d="M2.6 5.6 V5 A3.4 3.2 0 0 1 9.4 5 V8" fill="none" stroke="#ecbc2a" stroke-width="1.5"/><rect x="0.3" y="7" width="10.9" height="7.3" fill="#f5b000"/><rect x="4.9" y="8.6" width="1.7" height="4" fill="#fff2a8"/></svg>
<div class="t" style="left:-0.5px;top:279.18px;font-size:11px;color:#4a4a4a;letter-spacing:-0.6px;">未分组</div>
<div class="t" style="left:75.5px;top:279.18px;font-size:11px;color:#4a4a4a;letter-spacing:-0.6px;">小聂</div>
<div class="t" style="left:196.5px;top:279.18px;font-size:11px;color:#4a4a4a;letter-spacing:-0.2px;">192.168.31.16</div>
<div class="t" style="left:299px;top:279.18px;font-size:11px;color:#4a4a4a;letter-spacing:-0.6px;">透明解密</div>
<div class="t" style="left:368.5px;top:279.18px;font-size:11px;color:#4a4a4a;letter-spacing:-0.43px;">wps.exe</div>
<div class="t" style="left:483.5px;top:279.18px;font-size:11px;color:#4a4a4a;letter-spacing:0.0px;">C:<span style="letter-spacing:0.35px">\</span>Users<span style="letter-spacing:0.35px">\</span><span style="font-size:11px;letter-spacing:-0.3px">未知玩家</span>x100<span style="letter-spacing:0.35px">\</span>Desktop<span style="letter-spacing:0.35px">\</span><span style="font-size:11px;letter-spacing:-0.3px">自媒体账号</span>.xlsx</div>
<div class="t" style="left:1015px;top:279.18px;font-size:11px;color:#4a4a4a;">xlsx</div>
<div class="t" style="left:1075px;top:279.18px;font-size:11px;color:#4a4a4a;letter-spacing:-0.5px;">20.2KB</div>
<div class="t" style="left:1135.5px;top:279.18px;font-size:11px;color:#4a4a4a;letter-spacing:-0.1px;">2025-10-23 17:22:51</div>
<svg style="left:283px;top:281.88px" width="12" height="15"><path d="M2.6 5.6 V5 A3.4 3.2 0 0 1 9.4 5 V8" fill="none" stroke="#ecbc2a" stroke-width="1.5"/><rect x="0.3" y="7" width="10.9" height="7.3" fill="#f5b000"/><rect x="4.9" y="8.6" width="1.7" height="4" fill="#fff2a8"/></svg>
<div class="t" style="left:-0.5px;top:302.42px;font-size:11px;color:#4a4a4a;letter-spacing:-0.6px;">未分组</div>
<div class="t" style="left:75.5px;top:302.42px;font-size:11px;color:#4a4a4a;letter-spacing:-0.6px;">小聂</div>
<div class="t" style="left:196.5px;top:302.42px;font-size:11px;color:#4a4a4a;letter-spacing:-0.2px;">192.168.31.16</div>
<div class="t" style="left:299px;top:302.42px;font-size:11px;color:#4a4a4a;letter-spacing:-0.6px;">透明解密</div>
<div class="t" style="left:368.5px;top:302.42px;font-size:11px;color:#4a4a4a;letter-spacing:-0.43px;">360zip.exe</div>
<div class="t" style="left:483.5px;top:302.42px;font-size:11px;color:#4a4a4a;letter-spacing:0.0px;">C:<span style="letter-spacing:0.35px">\</span>Users<span style="letter-spacing:0.35px">\</span><span style="font-size:11px;letter-spacing:-0.3px">未知玩家</span>x100<span style="letter-spacing:0.35px">\</span>Documents<span style="letter-spacing:0.35px">\</span>WeChat Files<span style="letter-spacing:0.35px">\</span>wxid_eqxe3ridgi3e22<span style="letter-spacing:0.35px">\</span>FileStorage<span style="letter-spacing:0.35px">\</span>File<span style="letter-spacing:0.35px">\</span>2025-10<span style="letter-spacing:0.35px">\</span><span style="font-size:11px;letter-spacing:-0.3px">百家号</span>...</div>
<div class="t" style="left:1015px;top:302.42px;font-size:11px;color:#4a4a4a;">zip</div>
<div class="t" style="left:1075px;top:302.42px;font-size:11px;color:#4a4a4a;letter-spacing:-0.5px;">76.7KB</div>
<div class="t" style="left:1135.5px;top:302.42px;font-size:11px;color:#4a4a4a;letter-spacing:-0.1px;">2025-10-23 15:05:27</div>
<svg style="left:283px;top:305.12px" width="12" height="15"><path d="M2.6 5.6 V5 A3.4 3.2 0 0 1 9.4 5 V8" fill="none" stroke="#ecbc2a" stroke-width="1.5"/><rect x="0.3" y="7" width="10.9" height="7.3" fill="#f5b000"/><rect x="4.9" y="8.6" width="1.7" height="4" fill="#fff2a8"/></svg>
<div class="t" style="left:-0.5px;top:325.65999999999997px;font-size:11px;color:#4a4a4a;letter-spacing:-0.6px;">未分组</div>
<div class="t" style="left:75.5px;top:325.65999999999997px;font-size:11px;color:#4a4a4a;letter-spacing:-0.6px;">小聂</div>
<div class="t" style="left:196.5px;top:325.65999999999997px;font-size:11px;color:#4a4a4a;letter-spacing:-0.2px;">192.168.31.16</div>
<div class="t" style="left:299px;top:325.65999999999997px;font-size:11px;color:#4a4a4a;letter-spacing:-0.6px;">透明解密</div>
<div class="t" style="left:368.5px;top:325.65999999999997px;font-size:11px;color:#4a4a4a;letter-spacing:-0.43px;">360zip.exe</div>
<div class="t" style="left:483.5px;top:325.65999999999997px;font-size:11px;color:#4a4a4a;letter-spacing:0.0px;">C:<span style="letter-spacing:0.35px">\</span>Users<span style="letter-spacing:0.35px">\</span><span style="font-size:11px;letter-spacing:-0.3px">未知玩家</span>x100<span style="letter-spacing:0.35px">\</span>Documents<span style="letter-spacing:0.35px">\</span>WeChat Files<span style="letter-spacing:0.35px">\</span>wxid_eqxe3ridgi3e22<span style="letter-spacing:0.35px">\</span>FileStorage<span style="letter-spacing:0.35px">\</span>File<span style="letter-spacing:0.35px">\</span>2025-10<span style="letter-spacing:0.35px">\</span><span style="font-size:11px;letter-spacing:-0.3px">百家号</span>...</div>
<div class="t" style="left:1015px;top:325.65999999999997px;font-size:11px;color:#4a4a4a;">zip</div>
<div class="t" style="left:1075px;top:325.65999999999997px;font-size:11px;color:#4a4a4a;letter-spacing:-0.5px;">76.7KB</div>
<div class="t" style="left:1135.5px;top:325.65999999999997px;font-size:11px;color:#4a4a4a;letter-spacing:-0.1px;">2025-10-23 15:05:27</div>
<svg style="left:283px;top:328.35999999999996px" width="12" height="15"><path d="M2.6 5.6 V5 A3.4 3.2 0 0 1 9.4 5 V8" fill="none" stroke="#ecbc2a" stroke-width="1.5"/><rect x="0.3" y="7" width="10.9" height="7.3" fill="#f5b000"/><rect x="4.9" y="8.6" width="1.7" height="4" fill="#fff2a8"/></svg>
<div class="t" style="left:-0.5px;top:348.9px;font-size:11px;color:#4a4a4a;letter-spacing:-0.6px;">未分组</div>
<div class="t" style="left:75.5px;top:348.9px;font-size:11px;color:#4a4a4a;letter-spacing:-0.6px;">小聂</div>
<div class="t" style="left:196.5px;top:348.9px;font-size:11px;color:#4a4a4a;letter-spacing:-0.2px;">192.168.31.16</div>
<div class="t" style="left:299px;top:348.9px;font-size:11px;color:#4a4a4a;letter-spacing:-0.6px;">透明解密</div>
<div class="t" style="left:368.5px;top:348.9px;font-size:11px;color:#4a4a4a;letter-spacing:-0.43px;">java.exe</div>
<div class="t" style="left:483.5px;top:348.9px;font-size:11px;color:#4a4a4a;letter-spacing:0.0px;">D:<span style="letter-spacing:0.35px">\</span>Ping32<span style="letter-spacing:0.35px">\</span>Server<span style="letter-spacing:0.35px">\</span>ES<span style="letter-spacing:0.35px">\</span>logs<span style="letter-spacing:0.35px">\</span>nsec_audit.json</div>
<div class="t" style="left:1015px;top:348.9px;font-size:11px;color:#4a4a4a;">json</div>
<div class="t" style="left:1075px;top:348.9px;font-size:11px;color:#4a4a4a;letter-spacing:-0.5px;">8.2KB</div>
<div class="t" style="left:1135.5px;top:348.9px;font-size:11px;color:#4a4a4a;letter-spacing:-0.1px;">2025-10-23 15:04:17</div>
<svg style="left:283px;top:351.59999999999997px" width="12" height="15"><path d="M2.6 5.6 V5 A3.4 3.2 0 0 1 9.4 5 V8" fill="none" stroke="#ecbc2a" stroke-width="1.5"/><rect x="0.3" y="7" width="10.9" height="7.3" fill="#f5b000"/><rect x="4.9" y="8.6" width="1.7" height="4" fill="#fff2a8"/></svg>
<div class="t" style="left:-0.5px;top:372.14px;font-size:11px;color:#4a4a4a;letter-spacing:-0.6px;">未分组</div>
<div class="t" style="left:75.5px;top:372.14px;font-size:11px;color:#4a4a4a;letter-spacing:-0.6px;">小聂</div>
<div class="t" style="left:196.5px;top:372.14px;font-size:11px;color:#4a4a4a;letter-spacing:-0.2px;">192.168.31.16</div>
<div class="t" style="left:299px;top:372.14px;font-size:11px;color:#4a4a4a;letter-spacing:-0.6px;">透明解密</div>
<div class="t" style="left:368.5px;top:372.14px;font-size:11px;color:#4a4a4a;letter-spacing:-0.43px;">java.exe</div>
<div class="t" style="left:483.5px;top:372.14px;font-size:11px;color:#4a4a4a;letter-spacing:0.0px;">D:<span style="letter-spacing:0.35px">\</span>Ping32<span style="letter-spacing:0.35px">\</span>Server<span style="letter-spacing:0.35px">\</span>ES<span style="letter-spacing:0.35px">\</span>logs<span style="letter-spacing:0.35px">\</span>nsec_index_search_slowlog.json</div>
<div class="t" style="left:1015px;top:372.14px;font-size:11px;color:#4a4a4a;">json</div>
<div class="t" style="left:1075px;top:372.14px;font-size:11px;color:#4a4a4a;letter-spacing:-0.5px;">8.2KB</div>
<div class="t" style="left:1135.5px;top:372.14px;font-size:11px;color:#4a4a4a;letter-spacing:-0.1px;">2025-10-23 15:04:17</div>
<svg style="left:283px;top:374.84px" width="12" height="15"><path d="M2.6 5.6 V5 A3.4 3.2 0 0 1 9.4 5 V8" fill="none" stroke="#ecbc2a" stroke-width="1.5"/><rect x="0.3" y="7" width="10.9" height="7.3" fill="#f5b000"/><rect x="4.9" y="8.6" width="1.7" height="4" fill="#fff2a8"/></svg>
<div class="t" style="left:-0.5px;top:395.38px;font-size:11px;color:#4a4a4a;letter-spacing:-0.6px;">未分组</div>
<div class="t" style="left:75.5px;top:395.38px;font-size:11px;color:#4a4a4a;letter-spacing:-0.6px;">小聂</div>
<div class="t" style="left:196.5px;top:395.38px;font-size:11px;color:#4a4a4a;letter-spacing:-0.2px;">192.168.31.16</div>
<div class="t" style="left:299px;top:395.38px;font-size:11px;color:#4a4a4a;letter-spacing:-0.6px;">透明解密</div>
<div class="t" style="left:368.5px;top:395.38px;font-size:11px;color:#4a4a4a;letter-spacing:-0.43px;">java.exe</div>
<div class="t" style="left:483.5px;top:395.38px;font-size:11px;color:#4a4a4a;letter-spacing:0.0px;">D:<span style="letter-spacing:0.35px">\</span>Ping32<span style="letter-spacing:0.35px">\</span>Server<span style="letter-spacing:0.35px">\</span>ES<span style="letter-spacing:0.35px">\</span>logs<span style="letter-spacing:0.35px">\</span>nsec_index_indexing_slowlog.json</div>
<div class="t" style="left:1015px;top:395.38px;font-size:11px;color:#4a4a4a;">json</div>
<div class="t" style="left:1075px;top:395.38px;font-size:11px;color:#4a4a4a;letter-spacing:-0.5px;">8.2KB</div>
<div class="t" style="left:1135.5px;top:395.38px;font-size:11px;color:#4a4a4a;letter-spacing:-0.1px;">2025-10-23 15:04:17</div>
<svg style="left:283px;top:398.08px" width="12" height="15"><path d="M2.6 5.6 V5 A3.4 3.2 0 0 1 9.4 5 V8" fill="none" stroke="#ecbc2a" stroke-width="1.5"/><rect x="0.3" y="7" width="10.9" height="7.3" fill="#f5b000"/><rect x="4.9" y="8.6" width="1.7" height="4" fill="#fff2a8"/></svg>
<div class="t" style="left:-0.5px;top:418.62px;font-size:11px;color:#4a4a4a;letter-spacing:-0.6px;">未分组</div>
<div class="t" style="left:75.5px;top:418.62px;font-size:11px;color:#4a4a4a;letter-spacing:-0.6px;">小聂</div>
<div class="t" style="left:196.5px;top:418.62px;font-size:11px;color:#4a4a4a;letter-spacing:-0.2px;">192.168.31.16</div>
<div class="t" style="left:299px;top:418.62px;font-size:11px;color:#4a4a4a;letter-spacing:-0.6px;">透明解密</div>
<div class="t" style="left:368.5px;top:418.62px;font-size:11px;color:#4a4a4a;letter-spacing:-0.43px;">java.exe</div>
<div class="t" style="left:483.5px;top:418.62px;font-size:11px;color:#4a4a4a;letter-spacing:0.0px;">D:<span style="letter-spacing:0.35px">\</span>Ping32<span style="letter-spacing:0.35px">\</span>Server<span style="letter-spacing:0.35px">\</span>ES<span style="letter-spacing:0.35px">\</span>logs<span style="letter-spacing:0.35px">\</span>nsec_server.json</div>
<div class="t" style="left:1015px;top:418.62px;font-size:11px;color:#4a4a4a;">json</div>
<div class="t" style="left:1075px;top:418.62px;font-size:11px;color:#4a4a4a;letter-spacing:-0.5px;">153.7KB</div>
<div class="t" style="left:1135.5px;top:418.62px;font-size:11px;color:#4a4a4a;letter-spacing:-0.1px;">2025-10-23 15:04:17</div>
<svg style="left:283px;top:421.32px" width="12" height="15"><path d="M2.6 5.6 V5 A3.4 3.2 0 0 1 9.4 5 V8" fill="none" stroke="#ecbc2a" stroke-width="1.5"/><rect x="0.3" y="7" width="10.9" height="7.3" fill="#f5b000"/><rect x="4.9" y="8.6" width="1.7" height="4" fill="#fff2a8"/></svg>
<div class="t" style="left:-0.5px;top:441.85999999999996px;font-size:11px;color:#4a4a4a;letter-spacing:-0.6px;">未分组</div>
<div class="t" style="left:75.5px;top:441.85999999999996px;font-size:11px;color:#4a4a4a;letter-spacing:-0.6px;">小聂</div>
<div class="t" style="left:196.5px;top:441.85999999999996px;font-size:11px;color:#4a4a4a;letter-spacing:-0.2px;">192.168.31.16</div>
<div class="t" style="left:299px;top:441.85999999999996px;font-size:11px;color:#4a4a4a;letter-spacing:-0.6px;">透明解密</div>
<div class="t" style="left:368.5px;top:441.85999999999996px;font-size:11px;color:#4a4a4a;letter-spacing:-0.43px;">java.exe</div>
<div class="t" style="left:483.5px;top:441.85999999999996px;font-size:11px;color:#4a4a4a;letter-spacing:0.0px;">D:<span style="letter-spacing:0.35px">\</span>Ping32<span style="letter-spacing:0.35px">\</span>Server<span style="letter-spacing:0.35px">\</span>ES<span style="letter-spacing:0.35px">\</span>logs<span style="letter-spacing:0.35px">\</span>nsec_index_search_slowlog.json</div>
<div class="t" style="left:1015px;top:441.85999999999996px;font-size:11px;color:#4a4a4a;">json</div>
<div class="t" style="left:1075px;top:441.85999999999996px;font-size:11px;color:#4a4a4a;letter-spacing:-0.5px;">8.2KB</div>
<div class="t" style="left:1135.5px;top:441.85999999999996px;font-size:11px;color:#4a4a4a;letter-spacing:-0.1px;">2025-10-23 15:04:17</div>
<svg style="left:283px;top:444.55999999999995px" width="12" height="15"><path d="M2.6 5.6 V5 A3.4 3.2 0 0 1 9.4 5 V8" fill="none" stroke="#ecbc2a" stroke-width="1.5"/><rect x="0.3" y="7" width="10.9" height="7.3" fill="#f5b000"/><rect x="4.9" y="8.6" width="1.7" height="4" fill="#fff2a8"/></svg>
<div class="t" style="left:-0.5px;top:465.09999999999997px;font-size:11px;color:#4a4a4a;letter-spacing:-0.6px;">未分组</div>
<div class="t" style="left:75.5px;top:465.09999999999997px;font-size:11px;color:#4a4a4a;letter-spacing:-0.6px;">小聂</div>
<div class="t" style="left:196.5px;top:465.09999999999997px;font-size:11px;color:#4a4a4a;letter-spacing:-0.2px;">192.168.31.16</div>
<div class="t" style="left:299px;top:465.09999999999997px;font-size:11px;color:#4a4a4a;letter-spacing:-0.6px;">透明解密</div>
<div class="t" style="left:368.5px;top:465.09999999999997px;font-size:11px;color:#4a4a4a;letter-spacing:-0.43px;">java.exe</div>
<div class="t" style="left:483.5px;top:465.09999999999997px;font-size:11px;color:#4a4a4a;letter-spacing:0.0px;">D:<span style="letter-spacing:0.35px">\</span>Ping32<span style="letter-spacing:0.35px">\</span>Server<span style="letter-spacing:0.35px">\</span>ES<span style="letter-spacing:0.35px">\</span>logs<span style="letter-spacing:0.35px">\</span>nsec_index_indexing_slowlog.json</div>
<div class="t" style="left:1015px;top:465.09999999999997px;font-size:11px;color:#4a4a4a;">json</div>
<div class="t" style="left:1075px;top:465.09999999999997px;font-size:11px;color:#4a4a4a;letter-spacing:-0.5px;">8.2KB</div>
<div class="t" style="left:1135.5px;top:465.09999999999997px;font-size:11px;color:#4a4a4a;letter-spacing:-0.1px;">2025-10-23 15:04:17</div>
<svg style="left:283px;top:467.79999999999995px" width="12" height="15"><path d="M2.6 5.6 V5 A3.4 3.2 0 0 1 9.4 5 V8" fill="none" stroke="#ecbc2a" stroke-width="1.5"/><rect x="0.3" y="7" width="10.9" height="7.3" fill="#f5b000"/><rect x="4.9" y="8.6" width="1.7" height="4" fill="#fff2a8"/></svg>
<div class="t" style="left:-0.5px;top:488.34px;font-size:11px;color:#4a4a4a;letter-spacing:-0.6px;">未分组</div>
<div class="t" style="left:75.5px;top:488.34px;font-size:11px;color:#4a4a4a;letter-spacing:-0.6px;">小聂</div>
<div class="t" style="left:196.5px;top:488.34px;font-size:11px;color:#4a4a4a;letter-spacing:-0.2px;">192.168.31.16</div>
<div class="t" style="left:299px;top:488.34px;font-size:11px;color:#4a4a4a;letter-spacing:-0.6px;">透明解密</div>
<div class="t" style="left:368.5px;top:488.34px;font-size:11px;color:#4a4a4a;letter-spacing:-0.43px;">java.exe</div>
<div class="t" style="left:483.5px;top:488.34px;font-size:11px;color:#4a4a4a;letter-spacing:0.0px;">D:<span style="letter-spacing:0.35px">\</span>Ping32<span style="letter-spacing:0.35px">\</span>Server<span style="letter-spacing:0.35px">\</span>ES<span style="letter-spacing:0.35px">\</span>logs<span style="letter-spacing:0.35px">\</span>nsec_audit.json</div>
<div class="t" style="left:1015px;top:488.34px;font-size:11px;color:#4a4a4a;">json</div>
<div class="t" style="left:1075px;top:488.34px;font-size:11px;color:#4a4a4a;letter-spacing:-0.5px;">8.2KB</div>
<div class="t" style="left:1135.5px;top:488.34px;font-size:11px;color:#4a4a4a;letter-spacing:-0.1px;">2025-10-23 15:04:17</div>
<svg style="left:283px;top:491.03999999999996px" width="12" height="15"><path d="M2.6 5.6 V5 A3.4 3.2 0 0 1 9.4 5 V8" fill="none" stroke="#ecbc2a" stroke-width="1.5"/><rect x="0.3" y="7" width="10.9" height="7.3" fill="#f5b000"/><rect x="4.9" y="8.6" width="1.7" height="4" fill="#fff2a8"/></svg>
</div>
<div class="a" style="left:1240px;top:196px;width:2px;height:71.7px;background:#8e8e8e;"></div>
<svg style="left:0;top:700px" width="170" height="20" viewBox="0 700 170 20">
<g fill="#b8b8b8">
<path d="M4 708.8 L1 710.8 L4 712.8 Z"/><path d="M7 708.8 L4 710.8 L7 712.8 Z"/>
<path d="M17.5 708.8 L14.5 710.8 L17.5 712.8 Z"/><path d="M20.5 708.8 L17.5 710.8 L20.5 712.8 Z"/>
<path d="M32 708.8 L29.2 710.8 L32 712.8 Z"/>
</g>
<g fill="#606060">
<path d="M130 708.8 L132.8 710.8 L130 712.8 Z"/>
<path d="M141 708.8 L144 710.8 L141 712.8 Z"/><path d="M144 708.8 L147 710.8 L144 712.8 Z"/>
<path d="M153.3 708.8 L156.3 710.8 L153.3 712.8 Z"/><path d="M156.5 708.8 L159.5 710.8 L156.5 712.8 Z"/>
<rect x="160.3" y="708.6" width="1.1" height="4.4"/>
</g>
</svg>

<div class="t" style="left:47.5px;top:701px;font-size:11px;color:#444;letter-spacing:0px;">记录 1 of 140</div>
<div class="a" style="left:0px;top:719.5px;width:1242px;height:17.5px;background:#106fbf;"></div>
<div class="a" style="left:0px;top:719.5px;width:1242px;height:1px;background:#0a4f98;"></div>
<div class="t" style="left:2px;top:719.8px;font-size:11px;color:#f0f8ff;letter-spacing:-0.5px;">就绪</div>
<div class="t" style="left:1105.3px;top:719.8px;font-size:11px;color:#f0f8ff;letter-spacing:-0.5px;">任务中心</div>
<div class="t" style="left:1178px;top:719.8px;font-size:11px;color:#f0f8ff;letter-spacing:-0.5px;">1条未读信息</div>
<svg style="left:1080px;top:719px" width="162" height="18" viewBox="1080 719 162 18">
<g stroke="#74c47a" stroke-width="1.9" fill="none">
<line x1="1093.7" y1="723.6" x2="1093.7" y2="734"/>
<path d="M1088.6 728.8 L1093.7 733.8 L1098.8 728.8"/>
</g>
<rect x="1088.2" y="735.5" width="11" height="1.5" fill="#6cc070"/>
<rect x="1161.3" y="726" width="11.7" height="9" fill="#fff"/>
<rect x="1163" y="730" width="6" height="0.9" fill="#556"/><rect x="1163" y="732.2" width="6" height="0.9" fill="#556"/>
<circle cx="1171" cy="727.6" r="0.9" fill="#223"/>
</svg>

</body></html>
